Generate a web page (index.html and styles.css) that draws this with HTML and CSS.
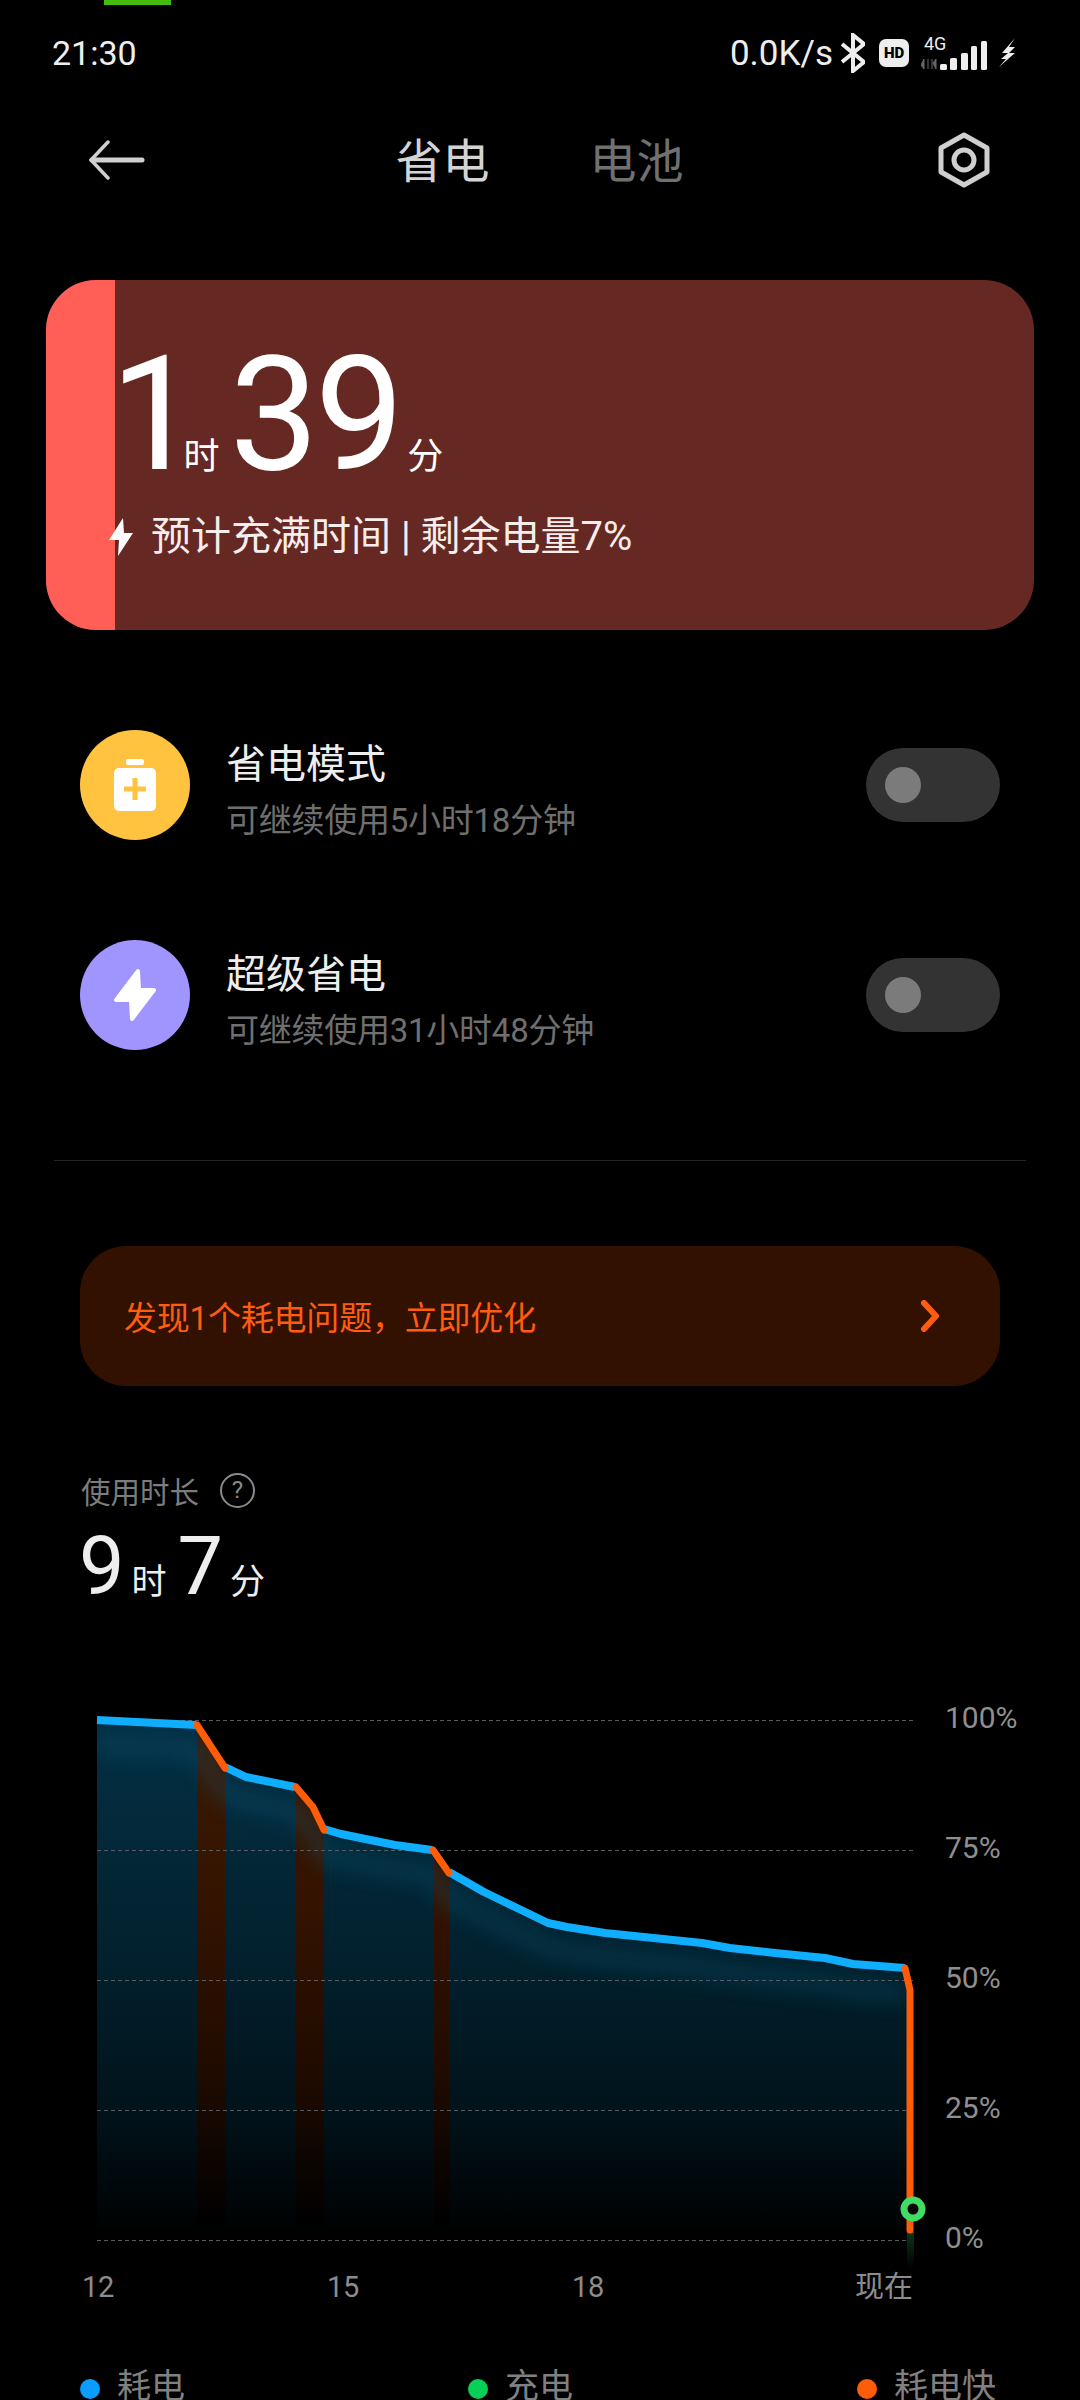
FILE: index.html
```html
<!DOCTYPE html>
<html lang="zh-CN">
<head>
    <meta charset="UTF-8">
    <meta name="viewport" content="width=device-width, initial-scale=1.0">
    <title>省电</title>
    <link rel="stylesheet" href="styles.css">
</head>
<body>
    <div class="page">
        <div class="call-pill"></div>

        <div class="status-bar">
            <span class="time">21:30</span>
            <div class="status-icons">
                <span class="speed">0.0K/s</span>
                <svg class="bt" width="24" height="40" viewBox="0 0 24 40">
                    <path d="M1 11 L23 29 L12 38 L12 2 L23 11 L1 29"/>
                </svg>
                <span class="hd">HD</span>
                <svg class="signal" width="70" height="40" viewBox="921 30 70 40">
                    <text x="924" y="47" class="net">4G</text>
                    <path class="net-arrows" d="M924 56v10l-3-4zM928 56v10M932 56v10M936 66v-10l-3 4z"/>
                    <rect x="940" y="61" width="7" height="6" rx="1.5"/>
                    <rect x="950" y="55" width="7" height="12" rx="1.5"/>
                    <rect x="961" y="50" width="7" height="17" rx="1.5"/>
                    <rect x="971" y="43" width="6" height="24" rx="1.5"/>
                    <rect x="981" y="38" width="6" height="29" rx="1.5"/>
                </svg>
                <svg class="charge" width="20" height="30" viewBox="0 0 18 30">
                    <path d="M17 0 L4 15 L10 15 L3 21 L8 21 L1 29 L17 15 L11 15 L17 9 L11 9 Z"/>
                </svg>
            </div>
        </div>

        <div class="nav">
            <svg class="back" width="57" height="40" viewBox="0 0 57 40">
                <path class="shaft" d="M4 20 H54"/>
                <path class="head" d="M20 2 L3 20 L20 38"/>
            </svg>
            <div class="tabs">
                <span class="tab active">省电</span>
                <span class="tab">电池</span>
            </div>
            <svg class="gear" width="52" height="56" viewBox="0 0 52 56">
                <path d="M26 3 L49 16 V40 L26 53 L3 40 V16 Z"/>
                <circle cx="26" cy="28" r="10"/>
            </svg>
        </div>

        <div class="battery-card">
            <div class="battery-fill" style="width: 7%"></div>
            <div class="big-time">
                <span class="num num-hours">1</span><span class="unit">时</span><span class="num num-mins">39</span><span class="unit unit-mins">分</span>
            </div>
            <div class="card-sub">
                <svg width="24" height="38" viewBox="0 0 24 38">
                    <path d="M14 0 L0 22 L10 22 L9 38 L24 15 L15 15 Z"/>
                </svg>
                <span>预计充满时间 | 剩余电量7%</span>
            </div>
        </div>

        <div class="mode-list">
            <div class="mode-row">
                <svg class="mode-icon" width="110" height="110" viewBox="0 0 110 110">
                    <circle class="yellow" cx="55" cy="55" r="55"/>
                    <rect class="white" x="46" y="29" width="18" height="6" rx="2"/>
                    <rect class="white" x="34" y="38" width="42" height="43" rx="5"/>
                    <path class="plus" d="M44 59 H66 M55 48 V70"/>
                </svg>
                <div class="mode-text">
                    <div class="mode-title">省电模式</div>
                    <div class="mode-desc">可继续使用5小时18分钟</div>
                </div>
                <div class="switch"><span class="knob"></span></div>
            </div>
            <div class="mode-row">
                <svg class="mode-icon" width="110" height="110" viewBox="0 0 110 110">
                    <circle class="purple" cx="55" cy="55" r="55"/>
                    <path class="bolt" d="M58 31 L36 60 L51 60 L52 79 L74 50 L59 50 Z"/>
                </svg>
                <div class="mode-text">
                    <div class="mode-title">超级省电</div>
                    <div class="mode-desc">可继续使用31小时48分钟</div>
                </div>
                <div class="switch"><span class="knob"></span></div>
            </div>
        </div>

        <div class="divider"></div>

        <div class="banner">
            <span>发现1个耗电问题，立即优化</span>
            <svg width="22" height="32" viewBox="0 0 22 32">
                <path d="M4 3 L16 16 L4 29"/>
            </svg>
        </div>

        <div class="usage-label">
            <span>使用时长</span>
            <span class="help">?</span>
        </div>
        <div class="usage-time">
            <span class="num">9</span><span class="unit">时</span><span class="num">7</span><span class="unit">分</span>
        </div>

        <div class="chart">
            <!-- viewBox is in page pixels, easier to read off the curve -->
            <svg class="plot" width="850" height="572" viewBox="80 1698 850 572">
                <defs>
                    <linearGradient id="areaFill" gradientUnits="userSpaceOnUse" x1="0" y1="1720" x2="0" y2="2240">
                        <stop offset="0" stop-color="#043045"/>
                        <stop offset="0.45" stop-color="#02212e"/>
                        <stop offset="0.75" stop-color="#01131b"/>
                        <stop offset="1" stop-color="#000"/>
                    </linearGradient>
                    <linearGradient id="fastFill" gradientUnits="userSpaceOnUse" x1="0" y1="1730" x2="0" y2="2225">
                        <stop offset="0" stop-color="#3c1a04"/>
                        <stop offset="0.35" stop-color="#341300"/>
                        <stop offset="0.7" stop-color="#1f0b00"/>
                        <stop offset="1" stop-color="#000"/>
                    </linearGradient>
                    <linearGradient id="greenFade" gradientUnits="userSpaceOnUse" x1="0" y1="2230" x2="0" y2="2268">
                        <stop offset="0" stop-color="#0c3a1c"/>
                        <stop offset="1" stop-color="#000"/>
                    </linearGradient>
                    <clipPath id="underLine">
                        <path d="M97 1720 L196 1725 L225 1768 L246 1777 L295 1787 L313 1807 L324 1830 L341 1834 L395 1845 L432 1850 L449 1873 L484 1892 L548 1923 L567 1927 L605 1933 L702 1943 L730 1948 L775 1953 L825 1958 L853 1964 L905 1968 L908 1988 L908 2240 L97 2240 Z"/>
                    </clipPath>
                    <filter id="soft" x="-10%" y="-30%" width="120%" height="160%">
                        <feGaussianBlur stdDeviation="10"/>
                    </filter>
                </defs>

                <g clip-path="url(#underLine)">
                    <rect class="area" x="97" y="1700" width="811" height="540"/>
                    <rect class="fast" x="197" y="1700" width="28" height="525"/>
                    <rect class="fast" x="296" y="1700" width="28" height="525"/>
                    <rect class="fast" x="434" y="1700" width="15" height="525"/>
                    <path class="glow" d="M97 1745 L196 1750 L225 1793 L246 1802 L295 1812 L313 1832 L324 1855 L341 1859 L395 1870 L432 1875 L449 1898 L484 1917 L548 1948 L567 1952 L605 1958 L702 1968 L730 1973 L775 1978 L825 1983 L853 1989 L905 1993"/>
                </g>

                <g class="grid">
                    <path d="M97 1720.5 H915"/>
                    <path d="M97 1850.5 H915"/>
                    <path d="M97 1980.5 H915"/>
                    <path d="M97 2110.5 H915"/>
                    <path d="M97 2240.5 H915"/>
                </g>

                <rect class="green-fade" x="907" y="2232" width="7" height="36"/>

                <g class="line-blue">
                    <path d="M97 1720 L196 1725"/>
                    <path d="M225 1767 L246 1777 L295 1787"/>
                    <path d="M324 1829 L341 1834 L395 1845 L432 1850"/>
                    <path d="M449 1872 L484 1892 L548 1923 L567 1927 L605 1933 L702 1943 L730 1948 L775 1953 L825 1958 L853 1964 L905 1968"/>
                </g>
                <g class="line-orange">
                    <path d="M197 1725 L225 1768"/>
                    <path d="M296 1787 L313 1807 L324 1830"/>
                    <path d="M433 1850 L449 1873"/>
                    <path d="M905 1968 L910 1990 V2230"/>
                </g>
                <circle class="now" cx="913" cy="2209" r="9"/>
            </svg>
            <div class="y-axis">
                <span>100%</span>
                <span>75%</span>
                <span>50%</span>
                <span>25%</span>
                <span>0%</span>
            </div>
        </div>

        <div class="x-axis">
            <span>12</span>
            <span>15</span>
            <span>18</span>
            <span class="x-now">现在</span>
        </div>

        <div class="legend">
            <div class="legend-item"><span class="dot dot-blue"></span>耗电</div>
            <div class="legend-item"><span class="dot dot-green"></span>充电</div>
            <div class="legend-item"><span class="dot dot-orange"></span>耗电快</div>
        </div>
    </div>
</body>
</html>
```

FILE: styles.css
```css
html, body {
    margin: 0;
    padding: 0;
    background: #000;
}

.page {
    position: relative;
    width: 1080px;
    height: 2400px;
    overflow: hidden;
    background: #000;
    color: #fff;
    font-family: Roboto, "Noto Sans CJK SC", sans-serif;
}

.call-pill {
    position: absolute;
    left: 104px;
    top: 0;
    width: 67px;
    height: 5px;
    background: #43bc0b;
}

/* status bar */
.status-bar {
    height: 106px;
    padding: 0 63px 0 52px;
    display: flex;
    align-items: center;
    justify-content: space-between;
    color: #eee;
}

.time {
    font-size: 34px;
}

.status-icons {
    display: flex;
    align-items: center;
}

.speed {
    font-size: 35px;
    margin-right: 8px;
}

.bt path {
    fill: none;
    stroke: #eee;
    stroke-width: 4;
}

.hd {
    width: 30px;
    height: 28px;
    margin: 0 12px 0 14px;
    border-radius: 7px;
    background: #eee;
    color: #000;
    font-size: 15px;
    font-weight: 900;
    line-height: 28px;
    text-align: center;
}

.signal rect {
    fill: #eee;
}

.net {
    font-family: Roboto, sans-serif;
    font-size: 18px;
    fill: #eee;
}

.net-arrows {
    fill: #666;
    stroke: #666;
    stroke-width: 1;
}

.charge {
    margin-left: 6px;
}

.charge path {
    fill: #eee;
}

/* top nav */
.nav {
    height: 108px;
    padding: 0 90px 0 88px;
    display: flex;
    align-items: center;
    justify-content: space-between;
}

.back path {
    fill: none;
    stroke: #d0d0d0;
    stroke-linecap: round;
    stroke-linejoin: round;
}

.back .shaft {
    stroke-width: 5;
}

.back .head {
    stroke-width: 3.5;
}

.tabs {
    display: flex;
    gap: 100px;
    margin: 3px 4px 0 0;
}

.tab {
    font-size: 47px;
    line-height: 60px;
    color: #707070;
}

.tab.active {
    color: #d4d4d4;
}

.gear path, .gear circle {
    fill: none;
    stroke: #cfcfcf;
    stroke-width: 5;
    stroke-linejoin: round;
}

/* battery card */
.battery-card {
    position: relative;
    height: 350px;
    margin: 66px 46px 0;
    padding-left: 64px;
    border-radius: 50px;
    background: #662822;
    overflow: hidden;
}

.battery-fill {
    position: absolute;
    left: 0;
    top: 0;
    bottom: 0;
    background: #ff5f57;
}

.big-time {
    position: relative;
    display: flex;
    align-items: baseline;
    height: 190px;
    padding-top: 60px;
    box-sizing: border-box;
}

.big-time .num {
    font-size: 159px;
    line-height: 150px;
    letter-spacing: -4px;
}

.big-time .num-hours {
    letter-spacing: -16px;
}

.big-time .unit {
    font-size: 36px;
}

.big-time .num-mins {
    margin-left: 10px;
}

.big-time .unit-mins {
    margin-left: 7px;
}

.card-sub {
    position: relative;
    display: flex;
    align-items: center;
    gap: 18px;
    margin: 47px 0 0 -1px;
    font-size: 40px;
    line-height: 40px;
    color: #f6eeec;
}

.card-sub svg path {
    fill: #fff;
}

/* power saving rows */
.mode-list {
    display: flex;
    flex-direction: column;
    gap: 100px;
    margin: 100px 80px 0;
}

.mode-row {
    display: flex;
    align-items: center;
    height: 110px;
}

.mode-icon {
    flex: none;
}

.yellow {
    fill: #ffc340;
}

.purple {
    fill: #a094ff;
}

.white {
    fill: #fff;
}

.plus {
    fill: none;
    stroke: #ffc340;
    stroke-width: 5;
}

.bolt {
    fill: #fff;
    stroke: #fff;
    stroke-width: 4;
    stroke-linejoin: round;
}

.mode-text {
    flex: 1;
    margin: 12px 0 0 36px;
}

.mode-title {
    font-size: 40px;
    line-height: 52px;
    color: #eee;
}

.mode-desc {
    margin-top: 8px;
    font-size: 33px;
    line-height: 44px;
    letter-spacing: -0.25px;
    color: #6f6f6f;
}

.switch {
    display: flex;
    align-items: center;
    width: 134px;
    height: 74px;
    padding-left: 19px;
    box-sizing: border-box;
    border-radius: 37px;
    background: #333;
}

.knob {
    width: 36px;
    height: 36px;
    border-radius: 50%;
    background: #7b7b7b;
}

.divider {
    height: 1px;
    margin: 110px 54px 0;
    background: #242424;
}

/* warning banner */
.banner {
    display: flex;
    align-items: center;
    justify-content: space-between;
    height: 140px;
    margin: 85px 80px 0;
    padding: 0 58px 0 44px;
    border-radius: 46px;
    background: #321100;
    color: #ff5c0f;
    font-size: 33px;
    letter-spacing: -0.2px;
}

.banner svg path {
    fill: none;
    stroke: #ff5c0f;
    stroke-width: 6;
    stroke-linecap: round;
    stroke-linejoin: round;
}

/* usage */
.usage-label {
    display: flex;
    align-items: center;
    gap: 21px;
    height: 36px;
    margin: 86px 0 0 81px;
    font-size: 29.5px;
    color: #7c7c7c;
}

.help {
    width: 31px;
    height: 31px;
    border: 2px solid #8a8a8a;
    border-radius: 50%;
    color: #8a8a8a;
    font-size: 24px;
    line-height: 31px;
    text-align: center;
}

.usage-time {
    display: flex;
    align-items: baseline;
    height: 90px;
    margin: 14px 0 0 79px;
    color: #eee;
}

.usage-time .num {
    font-size: 81px;
    line-height: 90px;
    letter-spacing: -2px;
}

.usage-time .unit {
    font-size: 35px;
    margin: 0 11px 0 9px;
}

/* chart */
.chart {
    position: absolute;
    left: 80px;
    top: 1698px;
    display: flex;
}

.plot {
    display: block;
    flex: none;
}

.area {
    fill: url(#areaFill);
}

.fast {
    fill: url(#fastFill);
}

.glow {
    fill: none;
    stroke: #0a5878;
    stroke-width: 20;
    opacity: 0.32;
    filter: url(#soft);
}

.grid path {
    fill: none;
    stroke: #565c5f;
    stroke-width: 1;
    stroke-dasharray: 4 3;
}

.green-fade {
    fill: url(#greenFade);
}

.line-blue path {
    fill: none;
    stroke: #10aeff;
    stroke-width: 8;
    stroke-linejoin: round;
}

.line-orange path {
    fill: none;
    stroke: #ff5c0a;
    stroke-width: 7;
    stroke-linejoin: round;
    stroke-linecap: round;
}

.now {
    fill: #000;
    stroke: #40dc64;
    stroke-width: 7;
}

.y-axis {
    display: flex;
    flex-direction: column;
    gap: 90px;
    margin-left: 15px;
    font-size: 30px;
    color: #8f8f8f;
}

.y-axis span {
    height: 40px;
    line-height: 40px;
}

.x-axis {
    position: absolute;
    left: 82px;
    top: 2270px;
    display: grid;
    grid-template-columns: 245px 245px 282px auto;
    font-size: 29px;
    line-height: 34px;
    letter-spacing: -0.4px;
    color: #8c8c8c;
}

.x-now {
    margin-left: 1px;
    letter-spacing: 0;
}

.legend {
    position: absolute;
    left: 80px;
    top: 2363px;
    display: grid;
    grid-template-columns: 388px 389px auto;
    font-size: 34px;
    line-height: 46px;
    color: #808080;
}

.legend-item {
    display: flex;
    align-items: center;
    gap: 17px;
}

.dot {
    width: 20px;
    height: 20px;
    border-radius: 50%;
    margin-top: 6px;
}

.dot-blue {
    background: #0a9dff;
}

.dot-green {
    background: #08cf56;
}

.dot-orange {
    background: #ff5c0a;
}
```
